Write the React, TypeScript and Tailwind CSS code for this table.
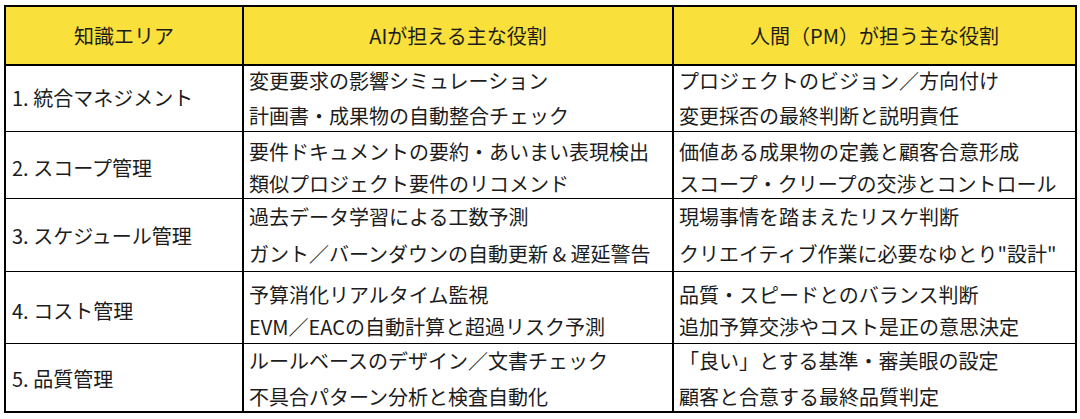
const rows = [
  {
    area: '1. 統合マネジメント',
    ai: ['変更要求の影響シミュレーション', '計画書・成果物の自動整合チェック'],
    pm: ['プロジェクトのビジョン／方向付け', '変更採否の最終判断と説明責任'],
    h: 'h-[66px]',
    gap: 'gap-[7px]',
    shift: 'translate-y-0',
  },
  {
    area: '2. スコープ管理',
    ai: ['要件ドキュメントの要約・あいまい表現検出', '類似プロジェクト要件のリコメンド'],
    pm: ['価値ある成果物の定義と顧客合意形成', 'スコープ・クリープの交渉とコントロール'],
    h: 'h-[67px]',
    gap: 'gap-[4px]',
    shift: 'translate-y-[3px]',
  },
  {
    area: '3. スケジュール管理',
    ai: ['過去データ学習による工数予測', 'ガント／バーンダウンの自動更新 & 遅延警告'],
    pm: ['現場事情を踏まえたリスケ判断', 'クリエイティブ作業に必要なゆとり"設計"'],
    h: 'h-[73px]',
    gap: 'gap-[9px]',
    shift: 'translate-y-[1px]',
  },
  {
    area: '4. コスト管理',
    ai: ['予算消化リアルタイム監視', 'EVM／EACの自動計算と超過リスク予測'],
    pm: ['品質・スピードとのバランス判断', '追加予算交渉やコスト是正の意思決定'],
    h: 'h-[72px]',
    gap: 'gap-[4px]',
    shift: 'translate-y-[4px]',
  },
  {
    area: '5. 品質管理',
    ai: ['ルールベースのデザイン／文書チェック', '不具合パターン分析と検査自動化'],
    pm: ['「良い」とする基準・審美眼の設定', '顧客と合意する最終品質判定'],
    h: 'h-[69px]',
    gap: 'gap-[8px]',
    shift: 'translate-y-[2px]',
  },
];

function Lines({ items, gap, shift }: { items: string[]; gap: string; shift: string }) {
  return (
    <div className={`flex flex-col ${gap} ${shift}`}>
      {items.map((t, i) => (
        <div key={i} className="leading-[28px] whitespace-nowrap">
          {t}
        </div>
      ))}
    </div>
  );
}

export default function App() {
  return (
    <div
      className="w-[1080px] h-[419px] bg-white pt-[5px] pl-[4px] text-[#1c1c1c] text-[20px]"
      style={{ fontFamily: '"Noto Sans CJK JP", "Noto Sans", sans-serif' }}
    >
      <table className="w-[1071px] border-collapse border-2 border-black table-fixed">
        <colgroup>
          <col className="w-[238px]" />
          <col className="w-[430px]" />
          <col className="w-[403px]" />
        </colgroup>
        <thead>
          <tr className="h-[59px] bg-[#f9e03a]">
            <th className="border-2 border-black font-normal text-center">知識エリア</th>
            <th className="border-2 border-black font-normal text-center">AIが担える主な役割</th>
            <th className="border-2 border-black font-normal text-center">人間（PM）が担う主な役割</th>
          </tr>
        </thead>
        <tbody>
          {rows.map((r, i) => (
            <tr key={i} className={r.h}>
              <td className="border-y border-black border-r-2 p-0 pl-[6px] align-middle">
                <div className={`leading-[28px] ${r.shift}`}>{r.area}</div>
              </td>
              <td className="border-y border-black border-r-2 p-0 pl-[5px] align-middle">
                <Lines items={r.ai} gap={r.gap} shift={r.shift} />
              </td>
              <td className="border-y border-black p-0 pl-[5px] align-middle">
                <Lines items={r.pm} gap={r.gap} shift={r.shift} />
              </td>
            </tr>
          ))}
        </tbody>
      </table>
    </div>
  );
}
